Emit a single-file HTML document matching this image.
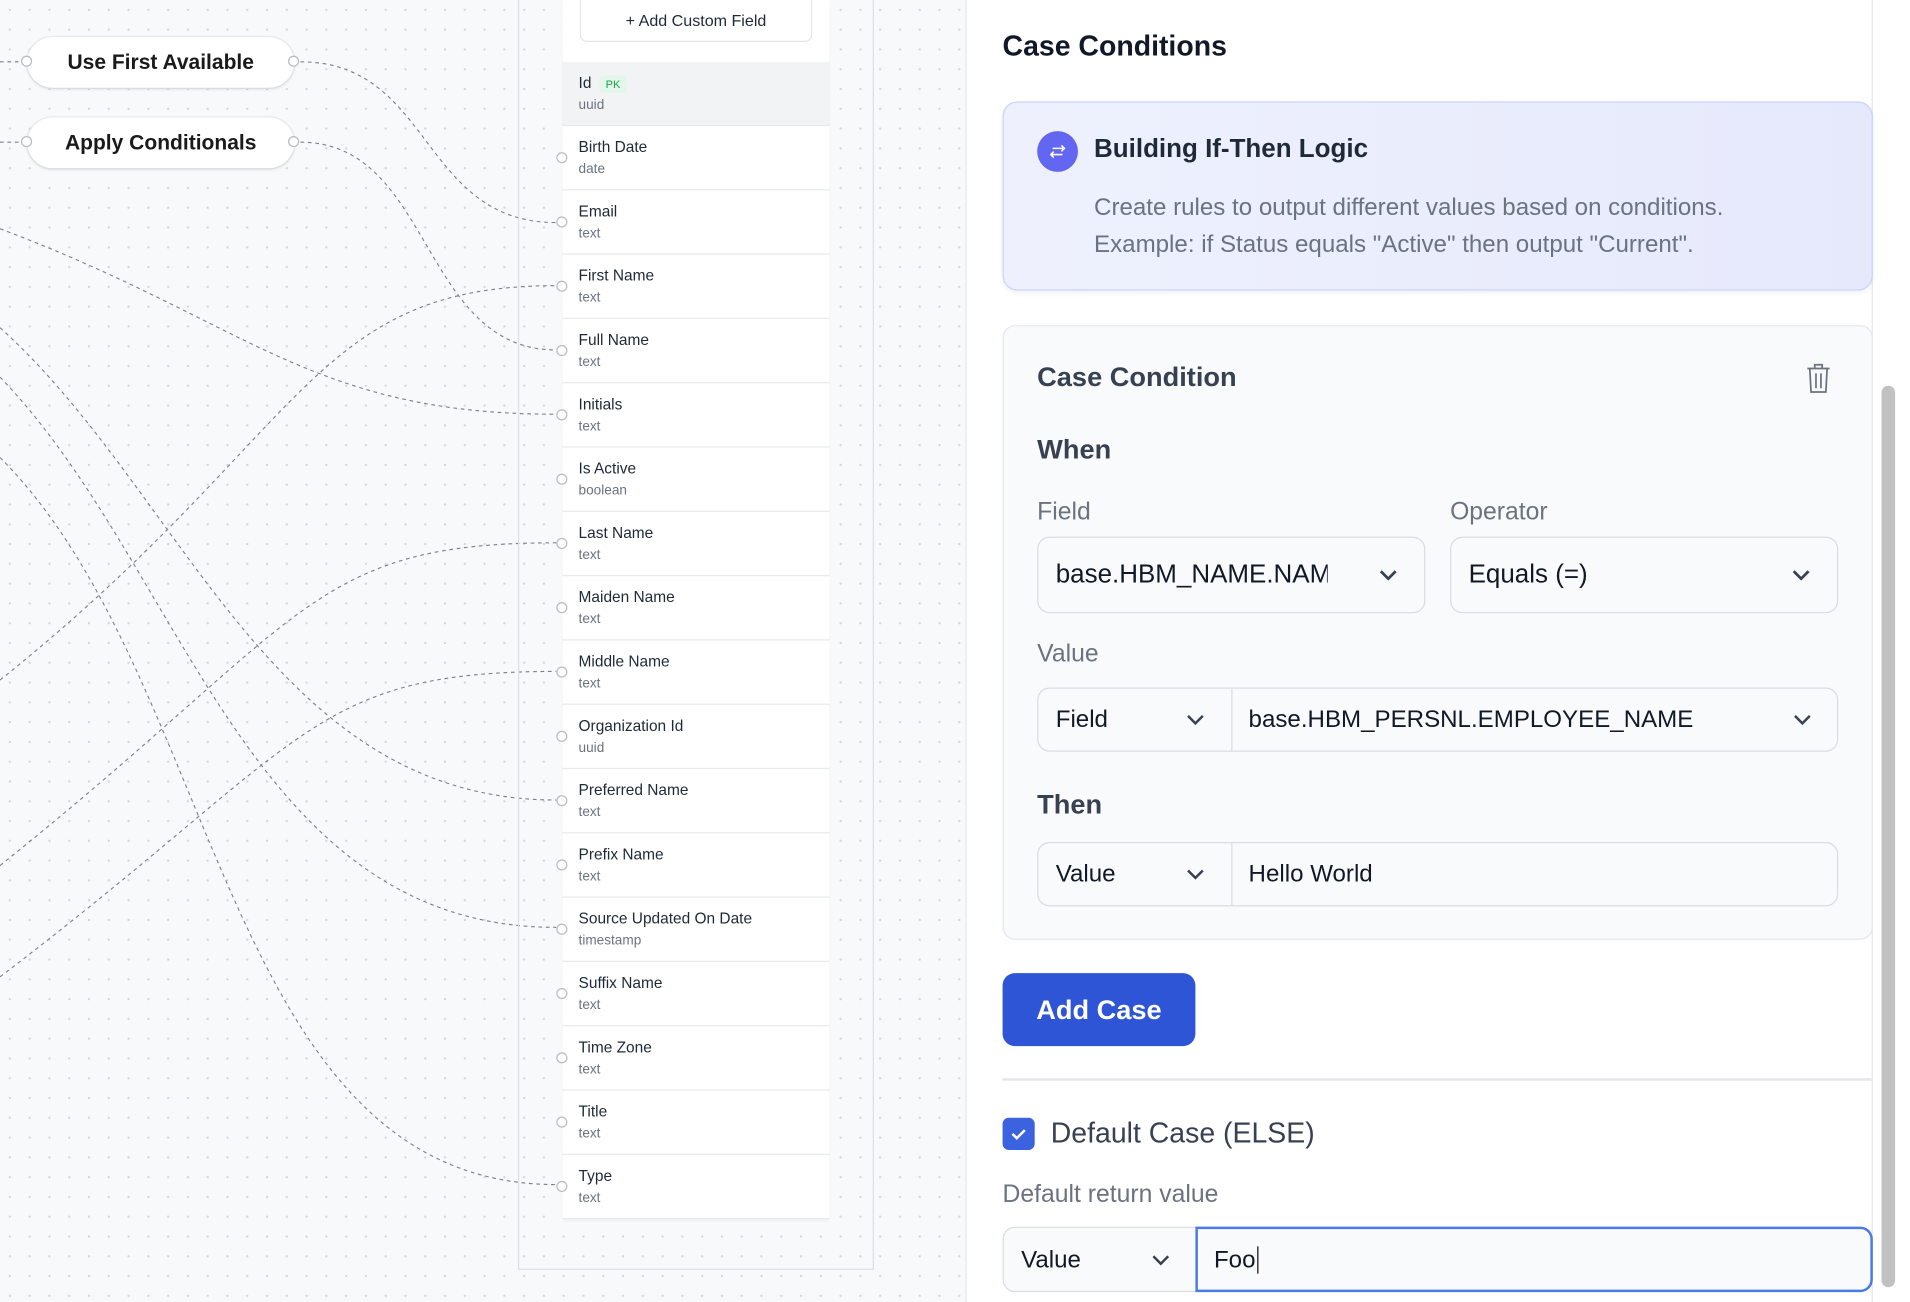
<!DOCTYPE html>
<html><head><meta charset="utf-8"><style>
*{box-sizing:border-box;margin:0;padding:0}
html,body{width:1910px;height:1302px;overflow:hidden;background:#fff;font-family:"Liberation Sans",Arial,sans-serif}
#s{position:absolute;left:0;top:0;width:1545px;height:1053px;transform:scale(1.2362,1.2365);transform-origin:0 0}
.abs{position:absolute}
#canvas{left:0;top:0;width:782px;height:1053px;background-color:#f8f9fb;background-image:radial-gradient(#d3d6dc 0.8px,transparent 1.1px);background-size:16px 16px;border-right:1px solid #e5e7eb}
.pill{position:absolute;left:22px;width:216px;height:41px;background:#fff;border-radius:21px;box-shadow:0 1px 3px rgba(0,0,0,.12),0 0 0 1px #eceef1;font-weight:bold;font-size:17px;color:#1a1a1a;text-align:center;line-height:41px}
.port{position:absolute;width:9px;height:9px;border-radius:50%;border:1px solid #b8bcc4;background:#fff}
#col{left:419px;top:-2px;width:288px;height:1029px;border:1px solid #dcdfe4;border-top:none}
#list{left:455px;top:0;width:216px;height:986px;background:#fff;box-shadow:0 1px 2px rgba(0,0,0,.06)}
.row{position:absolute;left:0;width:216px;height:52px;border-bottom:1px solid #e8eaed}
.row .n{position:absolute;left:13px;top:10px;font-size:12.5px;color:#1f2937}
.row .t{position:absolute;left:13px;top:29px;font-size:11px;color:#6b7280}
#panel{left:783px;top:0;width:732px;height:1053px;background:#fff;border-right:1px solid #e5e7eb}
.lbl{position:absolute;font-size:20px;color:#6b7280}
.h{position:absolute;font-size:22px;color:#374151;font-weight:600}
.box{position:absolute;border:1px solid #d9dce1;border-radius:10px;background:#f9fafb;font-size:21px;color:#111827}
.chev{position:absolute;width:16px;height:10px}
</style></head><body><div id="s">
<div id="canvas" class="abs"></div>
<svg class="abs" style="left:0;top:0" width="782" height="1053" fill="none" stroke="#7b7f87" stroke-width="0.9" stroke-dasharray="3 3">
<path d="M243 50 C350 50 340 180 450 180"/>
<path d="M243 115 C350 115 340 283 450 283"/>
<path d="M0 185 C200 260 250 335 450 335"/>
<path d="M0 550 C250 350 250 231 450 231"/>
<path d="M0 700 C250 500 250 439 450 439"/>
<path d="M0 790 C250 600 250 543 450 543"/>
<path d="M0 265 C150 400 220 647 450 647"/>
<path d="M0 305 C150 460 200 750 450 750"/>
<path d="M0 370 C180 550 180 958 450 958"/>
<path d="M0 50 L18 50"/><path d="M0 115 L18 115"/>
</svg>
<div class="pill" style="top:30px">Use First Available</div>
<div class="pill" style="top:95px">Apply Conditionals</div>
<div class="port" style="left:17px;top:45px"></div><div class="port" style="left:233px;top:45px"></div>
<div class="port" style="left:17px;top:110px"></div><div class="port" style="left:233px;top:110px"></div>
<div id="col" class="abs"></div>
<div id="list" class="abs">
<div class="abs" style="left:14px;top:0;width:188px;height:34px;border:1px solid #e3e5e8;border-top:none;border-radius:0 0 6px 6px;background:#fff;text-align:center;line-height:34px;font-size:13px;color:#1f2937">+ Add Custom Field</div>
<div class="row" style="top:50px;background:#f2f3f5"><span class="n">Id <span style="font-size:9px;color:#16a34a;background:#e3f6ea;padding:2px 5px;border-radius:3px;margin-left:3px">PK</span></span><span class="t">uuid</span></div>
<div class="row" style="top:102px"><span class="n">Birth Date</span><span class="t">date</span></div>
<div class="row" style="top:154px"><span class="n">Email</span><span class="t">text</span></div>
<div class="row" style="top:206px"><span class="n">First Name</span><span class="t">text</span></div>
<div class="row" style="top:258px"><span class="n">Full Name</span><span class="t">text</span></div>
<div class="row" style="top:310px"><span class="n">Initials</span><span class="t">text</span></div>
<div class="row" style="top:362px"><span class="n">Is Active</span><span class="t">boolean</span></div>
<div class="row" style="top:414px"><span class="n">Last Name</span><span class="t">text</span></div>
<div class="row" style="top:466px"><span class="n">Maiden Name</span><span class="t">text</span></div>
<div class="row" style="top:518px"><span class="n">Middle Name</span><span class="t">text</span></div>
<div class="row" style="top:570px"><span class="n">Organization Id</span><span class="t">uuid</span></div>
<div class="row" style="top:622px"><span class="n">Preferred Name</span><span class="t">text</span></div>
<div class="row" style="top:674px"><span class="n">Prefix Name</span><span class="t">text</span></div>
<div class="row" style="top:726px"><span class="n">Source Updated On Date</span><span class="t">timestamp</span></div>
<div class="row" style="top:778px"><span class="n">Suffix Name</span><span class="t">text</span></div>
<div class="row" style="top:830px"><span class="n">Time Zone</span><span class="t">text</span></div>
<div class="row" style="top:882px"><span class="n">Title</span><span class="t">text</span></div>
<div class="row" style="top:934px"><span class="n">Type</span><span class="t">text</span></div>
</div>
<div class="port" style="left:450px;top:123px"></div><div class="port" style="left:450px;top:175px"></div><div class="port" style="left:450px;top:227px"></div><div class="port" style="left:450px;top:279px"></div><div class="port" style="left:450px;top:331px"></div><div class="port" style="left:450px;top:383px"></div><div class="port" style="left:450px;top:435px"></div><div class="port" style="left:450px;top:487px"></div><div class="port" style="left:450px;top:539px"></div><div class="port" style="left:450px;top:591px"></div><div class="port" style="left:450px;top:643px"></div><div class="port" style="left:450px;top:695px"></div><div class="port" style="left:450px;top:747px"></div><div class="port" style="left:450px;top:799px"></div><div class="port" style="left:450px;top:851px"></div><div class="port" style="left:450px;top:903px"></div><div class="port" style="left:450px;top:955px"></div>

<div id="panel" class="abs"></div>
<div class="abs" style="left:1522px;top:312px;width:11px;height:729px;background:#c1c1c1;border-radius:6px"></div>
<div class="abs" style="left:811px;top:24px;font-size:23px;font-weight:bold;color:#111827">Case Conditions</div>
<div class="abs" style="left:811px;top:82px;width:704px;height:153px;border:1.5px solid #c7d2fe;border-radius:12px;background:linear-gradient(90deg,#eef1fd,#e6e9fc);box-shadow:0 2px 4px rgba(0,0,0,.05)"></div>
<div class="abs" style="left:839px;top:106px;width:33px;height:33px;border-radius:50%;background:#6366f1"></div>
<svg class="abs" style="left:839px;top:106px" width="33" height="33" fill="none" stroke="#fff" stroke-width="1.3" stroke-linecap="round"><path d="M13 14h9m-2-2 2 2-2 2M20 19h-9m2-2-2 2 2 2"/></svg>
<div class="abs" style="left:885px;top:109px;font-size:21px;font-weight:bold;color:#1f2937">Building If-Then Logic</div>
<div class="abs" style="left:885px;top:154px;font-size:19.5px;color:#6b7280;line-height:29.5px">Create rules to output different values based on conditions.<br>Example: if Status equals "Active" then output "Current".</div>

<div class="abs" style="left:811px;top:263px;width:704px;height:497px;border:1px solid #e5e7eb;border-radius:10px;background:#f9fafb"></div>
<div class="h" style="left:839px;top:292px">Case Condition</div>
<svg class="abs" style="left:1461px;top:294px" width="20" height="24" fill="none" stroke="#6b7280" stroke-width="1.4"><path d="M1 4h18M7 4V1h6v3M3 4l1 19h12l1-19M8 8v12M12 8v12"/></svg>
<div class="h" style="left:839px;top:351px">When</div>
<div class="lbl" style="left:839px;top:403px">Field</div>
<div class="lbl" style="left:1173px;top:403px">Operator</div>
<div class="box" style="left:839px;top:434px;width:314px;height:62px"><span class="abs" style="left:14px;top:18px;width:220px;overflow:hidden;white-space:nowrap">base.HBM_NAME.NAME</span></div>
<svg class="chev" style="left:1115px;top:460px" viewBox="0 0 16 10" fill="none" stroke="#374151" stroke-width="2.2"><path d="M2 2l6 6 6-6"/></svg>
<div class="box" style="left:1173px;top:434px;width:314px;height:62px"><span class="abs" style="left:14px;top:18px">Equals (=)</span></div>
<svg class="chev" style="left:1449px;top:460px" viewBox="0 0 16 10" fill="none" stroke="#374151" stroke-width="2.2"><path d="M2 2l6 6 6-6"/></svg>
<div class="lbl" style="left:839px;top:518px">Value</div>
<div class="box" style="left:839px;top:556px;width:648px;height:52px"><span class="abs" style="left:14px;top:14px;font-size:19.5px">Field</span><div class="abs" style="left:156px;top:0;width:1px;height:50px;background:#d9dce1"></div><span class="abs" style="left:170px;top:14px;font-size:19.5px">base.HBM_PERSNL.EMPLOYEE_NAME</span></div>
<svg class="chev" style="left:959px;top:577px" viewBox="0 0 16 10" fill="none" stroke="#374151" stroke-width="2"><path d="M2 2l6 6 6-6"/></svg>
<svg class="chev" style="left:1450px;top:577px" viewBox="0 0 16 10" fill="none" stroke="#374151" stroke-width="2"><path d="M2 2l6 6 6-6"/></svg>
<div class="h" style="left:839px;top:638px">Then</div>
<div class="box" style="left:839px;top:681px;width:648px;height:52px"><span class="abs" style="left:14px;top:14px;font-size:19.5px">Value</span><div class="abs" style="left:156px;top:0;width:1px;height:50px;background:#d9dce1"></div><span class="abs" style="left:170px;top:14px;font-size:19.5px">Hello World</span></div>
<svg class="chev" style="left:959px;top:702px" viewBox="0 0 16 10" fill="none" stroke="#374151" stroke-width="2"><path d="M2 2l6 6 6-6"/></svg>
<div class="abs" style="left:811px;top:787px;width:156px;height:59px;background:#2d55d6;border-radius:10px;color:#fff;font-size:22px;font-weight:bold;text-align:center;line-height:59px">Add Case</div>
<div class="abs" style="left:811px;top:872px;width:704px;height:2px;background:#e5e7eb"></div>
<div class="abs" style="left:811px;top:904px;width:26px;height:26px;border-radius:5px;background:#3b63e0"></div>
<svg class="abs" style="left:811px;top:904px" width="26" height="26" fill="none" stroke="#fff" stroke-width="2"><path d="M8 13l3.5 3.5L18 10"/></svg>
<div class="abs" style="left:850px;top:903px;font-size:23px;color:#374151;font-weight:500">Default Case (ELSE)</div>
<div class="lbl" style="left:811px;top:955px;color:#6b7280">Default return value</div>
<div class="box" style="left:811px;top:992px;width:160px;height:53px;border-radius:10px 0 0 10px;border-right:none"><span class="abs" style="left:14px;top:15px;font-size:19.5px">Value</span></div>
<svg class="chev" style="left:931px;top:1014px" viewBox="0 0 16 10" fill="none" stroke="#374151" stroke-width="2"><path d="M2 2l6 6 6-6"/></svg>
<div class="abs" style="left:967px;top:992px;width:548px;height:53px;border:2px solid #4b7ae8;border-radius:0 10px 10px 0;background:#f9fafb"><span class="abs" style="left:13px;top:14px;font-size:19.5px;color:#111827">Foo<span style="border-left:1.5px solid #111;margin-left:1px"></span></span></div>
</div></body></html>
